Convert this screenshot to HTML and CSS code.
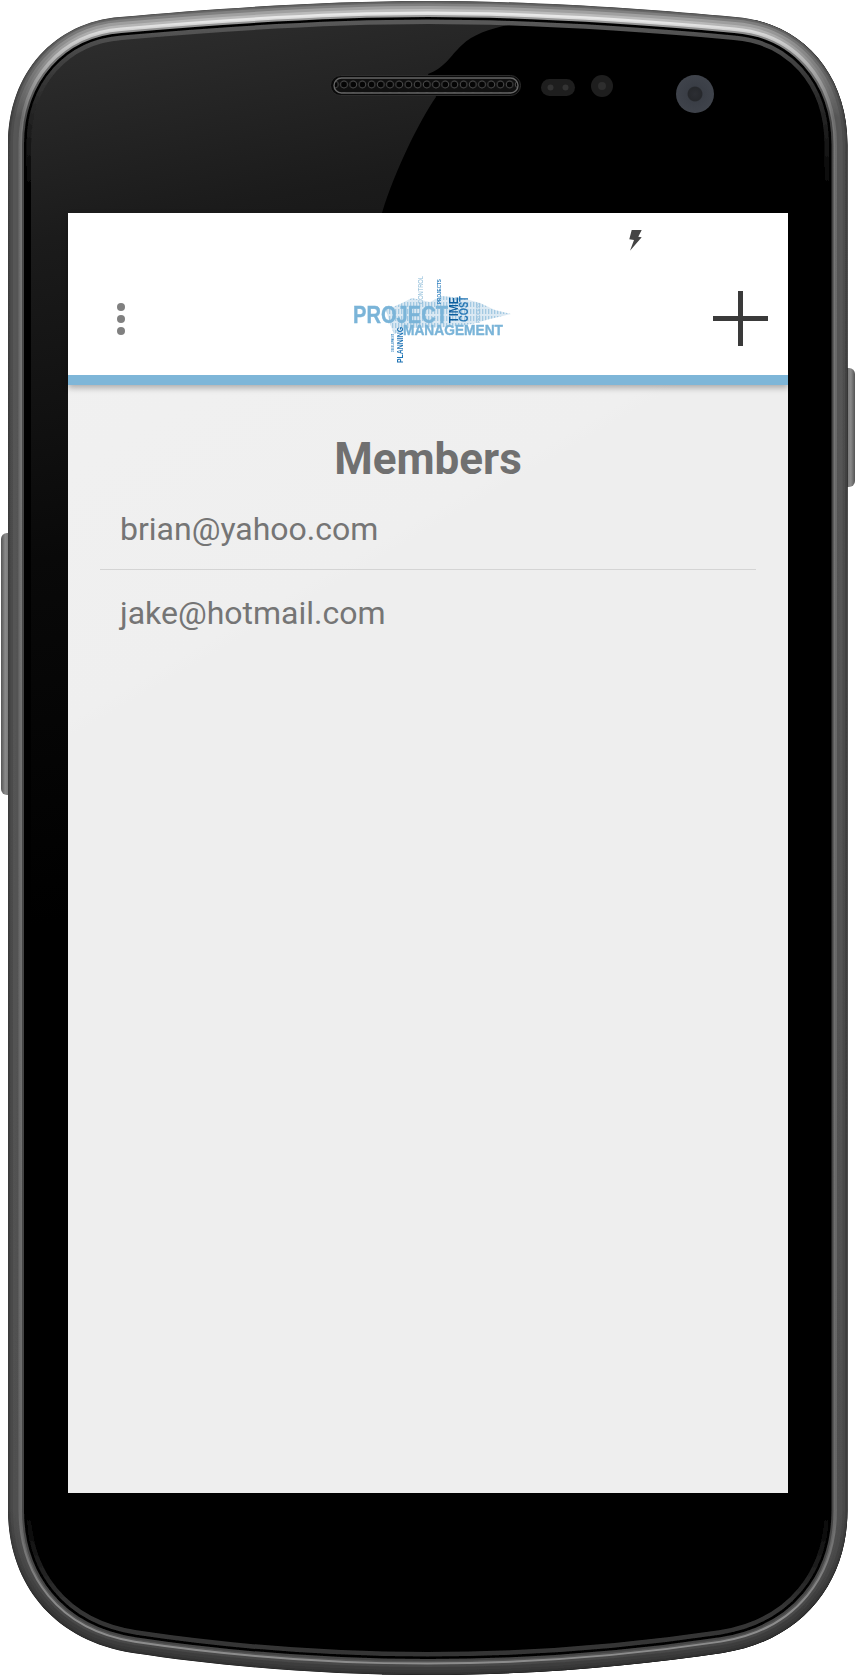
FILE: index.html
```html
<!DOCTYPE html>
<html lang="en">
<head>
<meta charset="utf-8">
<title>Members</title>
<link rel="stylesheet" href="styles.css">
</head>
<body>
<div class="device">
  <svg class="bezel" width="856" height="1676" viewBox="0 0 856 1676" aria-hidden="true">
    <defs>
      <path id="shell" d="M427.75 1C320 1 210 9 120 17C55 22 8 72 8 145L8 1510C8 1580 50 1640 133 1653C220 1666 320 1675 427.75 1675C535 1675 635.5 1666 722.5 1653C805.5 1640 847.5 1580 847.5 1510L847.5 145C847.5 72 800.5 22 735.5 17C645.5 9 535 1 427.75 1Z"/>
      <clipPath id="shellClip"><use href="#shell"/></clipPath>
      <linearGradient id="glass" gradientUnits="userSpaceOnUse" x1="0" y1="20" x2="170" y2="900">
        <stop offset="0" stop-color="#303030"/><stop offset=".25" stop-color="#1b1b1b"/><stop offset=".6" stop-color="#090909"/><stop offset="1" stop-color="#000"/>
      </linearGradient>
      <linearGradient id="r0" gradientUnits="userSpaceOnUse" x1="0" y1="0" x2="0" y2="1676"><stop offset=".014" stop-color="#585858"/><stop offset=".06" stop-color="#2a2a2a"/><stop offset=".11" stop-color="#050505"/><stop offset=".9" stop-color="#000"/><stop offset=".96" stop-color="#363636"/></linearGradient>
      <linearGradient id="m1" gradientUnits="userSpaceOnUse" x1="0" y1="0" x2="0" y2="1676"><stop offset=".012" stop-color="#999"/><stop offset=".07" stop-color="#444"/><stop offset=".9" stop-color="#444"/><stop offset=".96" stop-color="#444"/></linearGradient>
      <linearGradient id="m2" gradientUnits="userSpaceOnUse" x1="0" y1="0" x2="0" y2="1676"><stop offset=".012" stop-color="#ddd"/><stop offset=".07" stop-color="#777"/><stop offset=".9" stop-color="#6c6c6c"/><stop offset=".96" stop-color="#555"/></linearGradient>
      <linearGradient id="m3" gradientUnits="userSpaceOnUse" x1="0" y1="0" x2="0" y2="1676"><stop offset=".012" stop-color="#e8e8e8"/><stop offset=".07" stop-color="#6c6c6c"/><stop offset=".9" stop-color="#666"/><stop offset=".96" stop-color="#8c8c8c"/></linearGradient>
      <linearGradient id="m4" gradientUnits="userSpaceOnUse" x1="0" y1="0" x2="0" y2="1676"><stop offset=".012" stop-color="#bbb"/><stop offset=".07" stop-color="#555"/><stop offset=".9" stop-color="#505050"/><stop offset=".96" stop-color="#484848"/></linearGradient>
      <linearGradient id="m5" gradientUnits="userSpaceOnUse" x1="0" y1="0" x2="0" y2="1676"><stop offset=".012" stop-color="#a0a0a0"/><stop offset=".07" stop-color="#575757"/><stop offset=".9" stop-color="#505050"/><stop offset=".96" stop-color="#3e3e3e"/></linearGradient>
      <linearGradient id="m6" gradientUnits="userSpaceOnUse" x1="0" y1="0" x2="0" y2="1676"><stop offset=".012" stop-color="#808080"/><stop offset=".07" stop-color="#4e4e4e"/><stop offset=".9" stop-color="#484848"/><stop offset=".96" stop-color="#383838"/></linearGradient>
      <linearGradient id="m7" gradientUnits="userSpaceOnUse" x1="0" y1="0" x2="0" y2="1676"><stop offset=".012" stop-color="#666"/><stop offset=".07" stop-color="#444"/><stop offset=".9" stop-color="#404040"/><stop offset=".96" stop-color="#333"/></linearGradient>
      <linearGradient id="m8" gradientUnits="userSpaceOnUse" x1="0" y1="0" x2="0" y2="1676"><stop offset=".012" stop-color="#555"/><stop offset=".07" stop-color="#3c3c3c"/><stop offset=".9" stop-color="#3a3a3a"/><stop offset=".96" stop-color="#2c2c2c"/></linearGradient>
      <linearGradient id="btnL" x1="0" y1="0" x2="1" y2="0"><stop offset="0" stop-color="#555"/><stop offset=".3" stop-color="#8a8a8a"/><stop offset=".7" stop-color="#707070"/></linearGradient>
      <linearGradient id="btnR" x1="1" y1="0" x2="0" y2="0"><stop offset="0" stop-color="#555"/><stop offset=".3" stop-color="#8a8a8a"/><stop offset=".7" stop-color="#707070"/></linearGradient>
      <pattern id="grille" patternUnits="userSpaceOnUse" x="339.4" y="79" width="9.2" height="12">
        <rect width="9.2" height="12" fill="#101010"/>
        <circle cx="4.6" cy="5.5" r="3.4" fill="#050505" stroke="#4e4e4e" stroke-width="1"/>
      </pattern>
      <radialGradient id="lens"><stop offset="0" stop-color="#2c2e33"/><stop offset=".36" stop-color="#26282c"/><stop offset=".42" stop-color="#3a3e46"/><stop offset="1" stop-color="#3f434b"/></radialGradient>
      <filter id="soft" x="-5%" y="-5%" width="110%" height="110%"><feGaussianBlur stdDeviation=".45"/></filter>
    </defs>

    <rect x="1" y="533" width="14" height="262" rx="6" fill="url(#btnL)"/>
    <rect x="841" y="368" width="14" height="119" rx="6" fill="url(#btnR)"/>

    <g clip-path="url(#shellClip)">
      <use href="#shell" fill="url(#glass)"/>
      <path d="M545 20C505 24 478 30 462 45C450 56 445 68 428 74L436 97C420 120 395 170 382 213L382 1676L860 1676L860 20Z" fill="#000"/>
      <g fill="none" filter="url(#soft)">
        <use href="#shell" stroke="url(#r0)" stroke-width="46"/>
        <use href="#shell" stroke="#000" stroke-width="37"/>
        <use href="#shell" stroke="url(#m1)" stroke-width="32"/>
        <use href="#shell" stroke="url(#m2)" stroke-width="28"/>
        <use href="#shell" stroke="url(#m3)" stroke-width="25"/>
        <use href="#shell" stroke="url(#m4)" stroke-width="21"/>
        <use href="#shell" stroke="url(#m5)" stroke-width="16"/>
        <use href="#shell" stroke="url(#m6)" stroke-width="10"/>
        <use href="#shell" stroke="url(#m7)" stroke-width="5"/>
        <use href="#shell" stroke="url(#m8)" stroke-width="2"/>
      </g>
    </g>

    <rect x="330.5" y="75.5" width="190" height="20" rx="10" fill="#0b0b0b" stroke="#2c2c2c"/>
    <rect x="334" y="78" width="184" height="15" rx="7.5" fill="url(#grille)" stroke="#666" stroke-width="1.4"/>

    <rect x="541" y="79" width="34" height="17" rx="8.5" fill="#1e1e1e"/>
    <circle cx="550.5" cy="87.5" r="3" fill="#333"/>
    <circle cx="565.5" cy="87.5" r="3" fill="#333"/>
    <circle cx="602" cy="86" r="11" fill="#1e1e1e"/>
    <circle cx="602" cy="86" r="4" fill="#2e2e2e"/>
    <circle cx="695" cy="94" r="19" fill="url(#lens)"/>
  </svg>

  <div class="screen">
    <header class="topbar">
      <div class="status">
        <svg class="bolt" width="13" height="21" viewBox="0 0 13 21" aria-hidden="true">
          <path d="M2.7 0L12.7 0L9.3 6.7L12.7 7.3L1 20.7L5 10L.3 9.3Z"/>
        </svg>
      </div>
      <div class="appbar">
        <div class="kebab"><span class="dot"></span><span class="dot"></span><span class="dot"></span></div>
        <svg class="logo" width="161" height="90" viewBox="0 0 161 90" role="img" aria-label="Project Management word cloud">
          <defs>
            <pattern id="cloudStripes" patternUnits="userSpaceOnUse" width="3" height="7">
              <rect width="3" height="7" fill="#dbe9f3"/>
              <rect width="1.3" height="5" fill="#a3c9e2"/>
            </pattern>
          </defs>
          <g filter="url(#soft)">
            <path d="M36 36L50 30L62 24L80 28L92 22L112 24L130 29L145 36L161 40L140 45L122 50L100 53L60 54L44 60L40 50Z" fill="url(#cloudStripes)"/>
            <text class="word word-blue word-heavy" x="3" y="49" font-size="24" textLength="95" lengthAdjust="spacingAndGlyphs">PROJECT</text>
            <text class="word word-blue word-heavy" x="53" y="61" font-size="14.5" textLength="100" lengthAdjust="spacingAndGlyphs">MANAGEMENT</text>
            <text class="word word-plan" transform="translate(53 89) rotate(-90)" font-size="8.5" textLength="36" lengthAdjust="spacingAndGlyphs">PLANNING</text>
            <text class="word word-time" transform="translate(108 49) rotate(-90)" font-size="13" textLength="26" lengthAdjust="spacingAndGlyphs">TIME</text>
            <text class="word word-cost" transform="translate(118 48) rotate(-90)" font-size="13" textLength="26" lengthAdjust="spacingAndGlyphs">COST</text>
            <text class="word word-ctrl" transform="translate(73 30) rotate(-90) scale(.82 1)" font-size="7">CONTROL</text>
            <text class="word word-proj" transform="translate(91 30) rotate(-90) scale(.77 1)" font-size="6">PROJECTS</text>
            <text class="word word-proc" transform="translate(130 49) rotate(-90)" font-size="6" textLength="20" lengthAdjust="spacingAndGlyphs">PROCESS</text>
            <text class="word word-proj" transform="translate(44 78) rotate(-90)" font-size="4" textLength="18" lengthAdjust="spacingAndGlyphs">DEVELOPMENT</text>
          </g>
        </svg>
        <svg class="plus" width="55" height="55" viewBox="0 0 55 55" aria-hidden="true">
          <path d="M25 0h5v25h25v5H30v25h-5V30H0v-5h25z"/>
        </svg>
      </div>
    </header>
    <main class="content">
      <h1 class="title">Members</h1>
      <ul class="members">
        <li class="member">brian@yahoo.com</li>
        <li class="member">jake@hotmail.com</li>
      </ul>
    </main>
  </div>
</div>
</body>
</html>
```
FILE: styles.css
```css
* { box-sizing: border-box; }

html, body {
  margin: 0;
  padding: 0;
  background: #fff;
}

.device {
  position: relative;
  width: 856px;
  height: 1676px;
  padding: 213px 68px 183px;
  overflow: hidden;
}

.bezel {
  position: absolute;
  top: 0;
  left: 0;
}

.screen {
  position: relative;
  display: flex;
  flex-direction: column;
  height: 1280px;
  background: linear-gradient(150deg, #f1f1f1 0, #efefef 30%, #eeeeee 31%, #eeeeee 100%);
  font-family: Roboto, "Liberation Sans", sans-serif;
}

.topbar {
  position: relative;
  background: #fff;
  border-bottom: 10px solid #7eb6d8;
  box-shadow: 0 3px 6px rgba(0, 0, 0, .28);
}

.status {
  display: flex;
  justify-content: flex-end;
  height: 49px;
  padding: 17px 146px 0 0;
}

.bolt { fill: #444; }

.appbar {
  display: flex;
  align-items: center;
  justify-content: space-between;
  height: 113px;
  padding: 0 20px 0 49px;
}

.kebab {
  display: flex;
  flex-direction: column;
  gap: 4px;
  margin-top: 1px;
}

.dot {
  width: 8px;
  height: 8px;
  border-radius: 50%;
  background: #808080;
}

.logo {
  margin-left: 23px;
  margin-top: 1px;
}

.plus { fill: #3a3a3a; }

.word {
  font-family: "Liberation Sans", Arial, sans-serif;
  font-weight: 700;
}
.word-heavy { stroke: #7ab4d8; stroke-width: .35; }
.word-blue { fill: #7ab4d8; }
.word-plan { fill: #1f74b5; }
.word-time { fill: #10609f; }
.word-cost { fill: #2878b5; }
.word-ctrl { fill: #8dbbd8; font-weight: 400; }
.word-proj { fill: #2f80bf; }
.word-proc { fill: #9cc5e0; }

.content {
  flex: 1;
  padding: 48px 32px 0;
}

.title {
  margin: 0 0 1px;
  font-size: 44px;
  line-height: 52px;
  font-weight: 700;
  text-align: center;
  color: #707070;
}

.members {
  margin: 0;
  padding: 0;
  list-style: none;
}

.member {
  padding: 23px 20px 20px;
  font-size: 32px;
  line-height: 40px;
  color: #757575;
}

.member + .member {
  border-top: 1px solid #d4d4d4;
}
```
